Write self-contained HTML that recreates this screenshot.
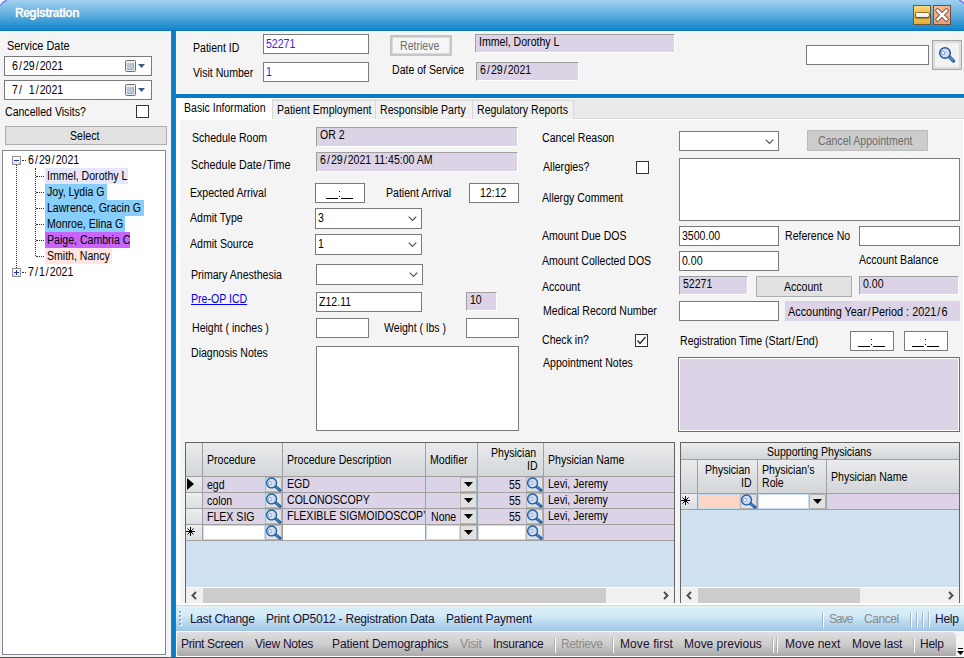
<!DOCTYPE html><html><head><meta charset="utf-8"><style>
*{margin:0;padding:0;box-sizing:content-box}
html,body{width:964px;height:658px;overflow:hidden;background:#f4f4f4;position:relative;font-family:'Liberation Sans',sans-serif;}
div{position:absolute}
.l{font-size:12px;line-height:14px;white-space:nowrap;color:#000;transform:scaleX(0.88);transform-origin:0 0}
.s{padding:0 1.2px}
.tb{background:#fff;border:1px solid #7a7a7a}
.lv{background:#dcd4e6;border-top:1px solid #a0a0a0;border-left:1px solid #a0a0a0;border-right:1px solid #fff;border-bottom:1px solid #fff}
.t{font-size:12px;line-height:14px;white-space:nowrap;color:#1a1030}
.hdr{background:linear-gradient(#e9ebed,#d3d6d9)}
.cell{background:#dcd4e6}
.gl{background:#a0a0a0}
</style></head><body>
<div style="left:0;top:0;width:964px;height:31px;background:linear-gradient(#a3d1ee,#62b0e0 45%,#1787cb 93%,#0878c2)"></div>
<div style="left:15px;top:6px;font-size:12px;line-height:15px;font-weight:bold;color:#fff;letter-spacing:-0.5px;-webkit-text-stroke:0.3px #fff;text-shadow:0 0 1px rgba(0,40,90,0.6)">Registration</div>
<svg style="position:absolute;left:0;top:0" width="9" height="9"><path d="M0 0 H7 Q2 1 0 6 Z" fill="#f2f2f2"/><path d="M7 0.5 Q2 1.5 0.5 6" fill="none" stroke="#7a7af8" stroke-width="1.3"/></svg>
<svg style="position:absolute;left:955px;top:0" width="9" height="9"><path d="M4 0 H9 V4 Q8 1 4 0 Z" fill="#f2f2f2"/><path d="M4 0.3 Q8 1 9 4" fill="none" stroke="#7a7af8" stroke-width="1.3"/></svg>
<div style="left:913px;top:5px;width:16px;height:18px;border:1px solid #6e5a3a;background:linear-gradient(#f9d98a,#f3c252 30%,#f0bc48 80%,#e4a838)"></div>
<div style="left:916px;top:13px;width:13px;height:4px;background:linear-gradient(#fff,#e8e8e8);border-radius:1px 2px 2px 1px;box-shadow:0 0 0 1px rgba(80,60,30,0.55),0 1px 1px 1px rgba(60,40,20,0.45)"></div>
<div style="left:933px;top:5px;width:16px;height:18px;border:1px solid #6e5040;background:linear-gradient(#f7b890,#ee9f72)"></div>
<svg style="position:absolute;left:933px;top:6px" width="18" height="18" viewBox="0 0 18 18"><path d="M4.5 4.5 L13.5 13.5 M13.5 4.5 L4.5 13.5" stroke="#503a30" stroke-width="4.2" stroke-linecap="round"/><path d="M4.5 4.5 L13.5 13.5 M13.5 4.5 L4.5 13.5" stroke="#fff" stroke-width="2.6" stroke-linecap="round"/></svg>
<div style="left:0;top:31px;width:964px;height:1px;background:#fcfcfc"></div>
<div class="l" style="left:7px;top:39px;transform:scaleX(0.91)">Service Date</div>
<div class="tb" style="left:4px;top:56px;width:146px;height:18px;border-color:#7a7a7a">
<div class="l" style="left:7px;top:2px;">6<span class="s">/</span>29<span class="s">/</span>2021</div>
<svg style="position:absolute;left:120px;top:3px" width="20" height="13" viewBox="0 0 20 13"><rect x="0.5" y="0.5" width="10" height="11" rx="1" fill="#e8eef8" stroke="#7a6a6a"/><rect x="2" y="3" width="7" height="7" fill="#aab2c2"/><g fill="#fff"><rect x="2.5" y="3.5" width="1" height="1"/><rect x="4.5" y="3.5" width="1" height="1"/><rect x="6.5" y="3.5" width="1" height="1"/><rect x="2.5" y="5.5" width="1" height="1"/><rect x="4.5" y="5.5" width="1" height="1"/><rect x="6.5" y="5.5" width="1" height="1"/><rect x="2.5" y="7.5" width="1" height="1"/><rect x="4.5" y="7.5" width="1" height="1"/><rect x="6.5" y="7.5" width="1" height="1"/></g><path d="M13 4 L20 4 L16.5 8 Z" fill="#3a5a8a"/></svg>
</div>
<div class="tb" style="left:4px;top:80px;width:146px;height:18px;border-color:#7a7a7a">
<div class="l" style="left:7px;top:2px;">7<span class="s">/</span>&nbsp; 1<span class="s">/</span>2021</div>
<svg style="position:absolute;left:120px;top:3px" width="20" height="13" viewBox="0 0 20 13"><rect x="0.5" y="0.5" width="10" height="11" rx="1" fill="#e8eef8" stroke="#7a6a6a"/><rect x="2" y="3" width="7" height="7" fill="#aab2c2"/><g fill="#fff"><rect x="2.5" y="3.5" width="1" height="1"/><rect x="4.5" y="3.5" width="1" height="1"/><rect x="6.5" y="3.5" width="1" height="1"/><rect x="2.5" y="5.5" width="1" height="1"/><rect x="4.5" y="5.5" width="1" height="1"/><rect x="6.5" y="5.5" width="1" height="1"/><rect x="2.5" y="7.5" width="1" height="1"/><rect x="4.5" y="7.5" width="1" height="1"/><rect x="6.5" y="7.5" width="1" height="1"/></g><path d="M13 4 L20 4 L16.5 8 Z" fill="#3a5a8a"/></svg>
</div>
<div class="l" style="left:5px;top:105px;">Cancelled Visits?</div>
<div style="left:136px;top:105px;width:11px;height:11px;border:1px solid #333;background:#fff"></div>
<div style="left:5px;top:126px;width:160px;height:17px;border:1px solid #adadad;background:#e1e1e1"></div>
<div class="l" style="left:70px;top:129px;">Select</div>
<div style="left:2px;top:150px;width:162px;height:503px;border:1px solid #828790;background:#fff"></div>
<div style="left:12px;top:156px;width:7px;height:7px;border:1px solid #919191;background:linear-gradient(#fff,#e0e0e0)"></div>
<div style="left:14px;top:160px;width:5px;height:1px;background:#1c3a8a"></div>
<div style="left:12px;top:268px;width:7px;height:7px;border:1px solid #919191;background:linear-gradient(#fff,#e0e0e0)"></div>
<div style="left:14px;top:272px;width:5px;height:1px;background:#1c3a8a"></div>
<div style="left:16px;top:270px;width:1px;height:5px;background:#1c3a8a"></div>
<div style="left:22px;top:160px;width:4px;border-top:1px dotted #303030"></div>
<div style="left:22px;top:272px;width:4px;border-top:1px dotted #303030"></div>
<div style="left:16px;top:165px;height:103px;border-left:1px dotted #303030"></div>
<div style="left:35px;top:168px;height:88px;border-left:1px dotted #303030"></div>
<div class="l" style="left:28px;top:153px;">6<span class="s">/</span>29<span class="s">/</span>2021</div>
<div style="left:36px;top:176px;width:8px;border-top:1px dotted #303030"></div>
<div style="left:45px;top:168px;width:83px;height:16px;background:#e6e6fa"></div>
<div class="l" style="left:47px;top:169px;">Immel, Dorothy L</div>
<div style="left:36px;top:192px;width:8px;border-top:1px dotted #303030"></div>
<div style="left:45px;top:184px;width:62px;height:16px;background:#87cefa"></div>
<div class="l" style="left:47px;top:185px;">Joy, Lydia G</div>
<div style="left:36px;top:208px;width:8px;border-top:1px dotted #303030"></div>
<div style="left:45px;top:200px;width:99px;height:16px;background:#87cefa"></div>
<div class="l" style="left:47px;top:201px;">Lawrence, Gracin G</div>
<div style="left:36px;top:224px;width:8px;border-top:1px dotted #303030"></div>
<div style="left:45px;top:216px;width:80px;height:16px;background:#87cefa"></div>
<div class="l" style="left:47px;top:217px;">Monroe, Elina G</div>
<div style="left:36px;top:240px;width:8px;border-top:1px dotted #303030"></div>
<div style="left:45px;top:232px;width:85px;height:16px;background:#c864f8"></div>
<div class="l" style="left:47px;top:233px;">Paige, Cambria C</div>
<div style="left:36px;top:256px;width:8px;border-top:1px dotted #303030"></div>
<div style="left:45px;top:248px;width:67px;height:16px;background:#ffe4e1"></div>
<div class="l" style="left:47px;top:249px;">Smith, Nancy</div>
<div class="l" style="left:28px;top:265px;">7<span class="s">/</span>1<span class="s">/</span>2021</div>
<div style="left:171px;top:31px;width:1px;height:627px;background:#6d6d6d"></div>
<div style="left:172px;top:31px;width:3px;height:627px;background:#0a7bc4"></div>
<div style="left:175px;top:31px;width:1px;height:627px;background:#6d6d6d"></div>
<div class="l" style="left:193px;top:41px;">Patient ID</div>
<div class="tb" style="left:263px;top:34px;width:104px;height:18px;">
<div class="l" style="left:2px;top:2px;color:#3a20e0;">52271</div>
</div>
<div class="l" style="left:193px;top:66px;">Visit Number</div>
<div class="tb" style="left:263px;top:62px;width:104px;height:18px;">
<div class="l" style="left:2px;top:2px;color:#3a20e0;">1</div>
</div>
<div style="left:390px;top:35px;width:58px;height:17px;border:2px solid #c6c6c6;background:#f6f6f6;box-shadow:inset 0 0 0 1px #dadada"></div>
<div class="l" style="left:400px;top:39px;color:#6d6d6d;">Retrieve</div>
<div class="lv" style="left:475px;top:34px;width:198px;height:17px;">
<div class="l" style="left:3px;top:0px;">Immel, Dorothy L</div>
</div>
<div class="l" style="left:392px;top:63px;">Date of Service</div>
<div class="lv" style="left:476px;top:62px;width:101px;height:17px;">
<div class="l" style="left:3px;top:0px;">6<span class="s">/</span>29<span class="s">/</span>2021</div>
</div>
<div class="tb" style="left:806px;top:45px;width:121px;height:18px;">
</div>
<div style="left:932px;top:40px;width:28px;height:28px;border:1px solid #a8a8a8;background:#f2f2f2;box-shadow:inset 0 0 0 2px #dcdcdc"></div>
<svg style="position:absolute;left:936px;top:44px" width="22" height="22" viewBox="0 0 22 22"><path d="M13 12.5 L17.5 17" stroke="#2a5ea8" stroke-width="3.4" stroke-linecap="round"/><path d="M13.5 13 L17 16.5" stroke="#6e94c8" stroke-width="1.2" stroke-linecap="round"/><circle cx="9" cy="9" r="5.3" fill="#d4dcf0" stroke="#1f5aa6" stroke-width="1.5"/><circle cx="7" cy="9" r="1.8" fill="#fff" stroke="#7d9bd0" stroke-width="1"/></svg>
<div style="left:176px;top:94px;width:788px;height:4px;background:#0a7bc4"></div>
<div style="left:176px;top:98px;width:788px;height:508px;background:#fff"></div>
<div style="left:176px;top:98px;width:788px;height:1px;background:#fbf7f6"></div>
<div style="left:272px;top:99px;width:692px;height:19px;background:#eaeaea"></div>
<div style="left:272px;top:118px;width:692px;height:1px;background:#d8d8d8"></div>
<div style="left:180px;top:120px;width:783px;height:485px;background:#f4f4f4"></div>
<div style="left:272px;top:100px;width:102px;height:18px;border:1px solid #d9d9d9;border-bottom:none;background:#f0f0f0"></div>
<div class="l" style="left:277px;top:103px;">Patient Employment</div>
<div style="left:375px;top:100px;width:96px;height:18px;border:1px solid #d9d9d9;border-bottom:none;background:#f0f0f0"></div>
<div class="l" style="left:380px;top:103px;">Responsible Party</div>
<div style="left:472px;top:100px;width:100px;height:18px;border:1px solid #d9d9d9;border-bottom:none;background:#f0f0f0"></div>
<div class="l" style="left:477px;top:103px;">Regulatory Reports</div>
<div class="l" style="left:184px;top:101px;">Basic Information</div>
<div class="l" style="left:192px;top:131px;">Schedule Room</div>
<div class="lv" style="left:316px;top:127px;width:200px;height:18px;">
<div class="l" style="left:3px;top:0px;">OR 2</div>
</div>
<div class="l" style="left:191px;top:158px;transform:scaleX(0.9)">Schedule Date<span class="s">/</span>Time</div>
<div class="lv" style="left:316px;top:152px;width:200px;height:18px;">
<div class="l" style="left:3px;top:0px;">6<span class="s">/</span>29<span class="s">/</span>2021 11:45:00 AM</div>
</div>
<div class="l" style="left:190px;top:186px;">Expected Arrival</div>
<div class="tb" style="left:315px;top:183px;width:48px;height:18px;">
<div style="left:10px;top:14px;width:12px;height:1px;background:#000"></div>
<div style="left:25px;top:14px;width:12px;height:1px;background:#000"></div>
<div style="left:23px;top:7px;width:1px;height:1px;background:#000"></div>
<div style="left:23px;top:12px;width:1px;height:1px;background:#000"></div>
</div>
<div class="l" style="left:386px;top:186px;">Patient Arrival</div>
<div class="tb" style="left:469px;top:183px;width:48px;height:18px;">
<div class="l" style="left:10px;top:2px;">12:12</div>
</div>
<div class="l" style="left:190px;top:211px;">Admit Type</div>
<div class="tb" style="left:315px;top:208px;width:105px;height:19px;">
<div class="l" style="left:2px;top:2px;">3</div>
<svg width="9" height="6" viewBox="0 0 9 6" style="position:absolute;right:4px;top:7px"><path d="M0.7 0.7 L4.5 4.5 L8.3 0.7" fill="none" stroke="#505050" stroke-width="1.15"/></svg>
</div>
<div class="l" style="left:190px;top:237px;">Admit Source</div>
<div class="tb" style="left:315px;top:234px;width:105px;height:19px;">
<div class="l" style="left:2px;top:2px;">1</div>
<svg width="9" height="6" viewBox="0 0 9 6" style="position:absolute;right:4px;top:7px"><path d="M0.7 0.7 L4.5 4.5 L8.3 0.7" fill="none" stroke="#505050" stroke-width="1.15"/></svg>
</div>
<div class="l" style="left:191px;top:268px;">Primary Anesthesia</div>
<div class="tb" style="left:316px;top:264px;width:105px;height:19px;">
<svg width="9" height="6" viewBox="0 0 9 6" style="position:absolute;right:4px;top:7px"><path d="M0.7 0.7 L4.5 4.5 L8.3 0.7" fill="none" stroke="#505050" stroke-width="1.15"/></svg>
</div>
<div class="l" style="left:191px;top:292px;color:#0000ee;text-decoration:underline;">Pre-OP ICD</div>
<div class="tb" style="left:316px;top:292px;width:104px;height:18px;">
<div class="l" style="left:2px;top:2px;">Z12.11</div>
</div>
<div class="lv" style="left:466px;top:292px;width:29px;height:17px;">
<div class="l" style="left:3px;top:0px;">10</div>
</div>
<div class="l" style="left:192px;top:321px;">Height ( inches )</div>
<div class="tb" style="left:316px;top:318px;width:51px;height:18px;">
</div>
<div class="l" style="left:384px;top:321px;">Weight ( lbs )</div>
<div class="tb" style="left:466px;top:318px;width:51px;height:18px;">
</div>
<div class="l" style="left:191px;top:346px;">Diagnosis Notes</div>
<div class="tb" style="left:316px;top:346px;width:201px;height:83px;">
</div>
<div class="l" style="left:542px;top:131px;">Cancel Reason</div>
<div class="tb" style="left:679px;top:131px;width:98px;height:18px;">
<svg width="9" height="6" viewBox="0 0 9 6" style="position:absolute;right:4px;top:7px"><path d="M0.7 0.7 L4.5 4.5 L8.3 0.7" fill="none" stroke="#505050" stroke-width="1.15"/></svg>
</div>
<div style="left:807px;top:130px;width:119px;height:19px;border:1px solid #bcbcbc;background:#cccccc"></div>
<div class="l" style="left:818px;top:134px;color:#6d6d6d;">Cancel Appointment</div>
<div class="l" style="left:543px;top:160px;">Allergies?</div>
<div style="left:636px;top:161px;width:11px;height:11px;border:1px solid #333;background:#fff"></div>
<div class="tb" style="left:679px;top:158px;width:279px;height:61px;">
</div>
<div class="l" style="left:542px;top:191px;">Allergy Comment</div>
<div class="l" style="left:542px;top:229px;">Amount Due DOS</div>
<div class="tb" style="left:679px;top:226px;width:98px;height:18px;">
<div class="l" style="left:2px;top:2px;">3500.00</div>
</div>
<div class="l" style="left:785px;top:229px;">Reference No</div>
<div class="tb" style="left:859px;top:226px;width:99px;height:18px;">
</div>
<div class="l" style="left:542px;top:254px;">Amount Collected DOS</div>
<div class="tb" style="left:679px;top:251px;width:98px;height:18px;">
<div class="l" style="left:2px;top:2px;">0.00</div>
</div>
<div class="l" style="left:859px;top:253px;">Account Balance</div>
<div class="l" style="left:542px;top:280px;">Account</div>
<div class="lv" style="left:679px;top:276px;width:67px;height:17px;">
<div class="l" style="left:3px;top:0px;">52271</div>
</div>
<div style="left:756px;top:276px;width:94px;height:19px;border:1px solid #adadad;background:#e1e1e1"></div>
<div class="l" style="left:784px;top:280px;">Account</div>
<div class="lv" style="left:859px;top:276px;width:98px;height:17px;">
<div class="l" style="left:3px;top:0px;">0.00</div>
</div>
<div class="l" style="left:543px;top:304px;">Medical Record Number</div>
<div class="tb" style="left:679px;top:301px;width:98px;height:18px;">
</div>
<div style="left:785px;top:301px;width:175px;height:20px;background:#dcd4e6"></div>
<div class="l" style="left:788px;top:305px;transform:scaleX(0.905)">Accounting Year<span class="s">/</span>Period : 2021<span class="s">/</span>6</div>
<div class="l" style="left:542px;top:333px;">Check in?</div>
<div style="left:635px;top:334px;width:11px;height:11px;border:1px solid #333;background:#fff"></div>
<svg style="position:absolute;left:635px;top:334px" width="13" height="13"><path d="M2.5 6.5 L5 9.5 L10.5 3" fill="none" stroke="#222" stroke-width="1.2"/></svg>
<div class="l" style="left:680px;top:334px;">Registration Time (Start<span class="s">/</span>End)</div>
<div class="tb" style="left:850px;top:331px;width:42px;height:18px;">
<div style="left:7px;top:14px;width:12px;height:1px;background:#000"></div>
<div style="left:22px;top:14px;width:12px;height:1px;background:#000"></div>
<div style="left:20px;top:7px;width:1px;height:1px;background:#000"></div>
<div style="left:20px;top:12px;width:1px;height:1px;background:#000"></div>
</div>
<div class="tb" style="left:904px;top:331px;width:42px;height:18px;">
<div style="left:7px;top:14px;width:12px;height:1px;background:#000"></div>
<div style="left:22px;top:14px;width:12px;height:1px;background:#000"></div>
<div style="left:20px;top:7px;width:1px;height:1px;background:#000"></div>
<div style="left:20px;top:12px;width:1px;height:1px;background:#000"></div>
</div>
<div class="l" style="left:543px;top:356px;">Appointment Notes</div>
<div style="left:678px;top:357px;width:280px;height:73px;border:1px solid #6d6d6d;background:#dcd4e6;box-shadow:inset 0 0 0 1px #fff"></div>
<div style="left:185px;top:442px;width:488px;height:160px;border:1px solid #646464;border-bottom:none;background:#cfe0f1"></div>
<div class="hdr" style="left:186px;top:443px;width:488px;height:33px"></div>
<div class="gl" style="left:186px;top:476px;width:488px;height:1px"></div>
<div class="gl" style="left:202px;top:443px;width:1px;height:97px"></div>
<div class="gl" style="left:282px;top:443px;width:1px;height:97px"></div>
<div class="gl" style="left:425px;top:443px;width:1px;height:97px"></div>
<div class="gl" style="left:477px;top:443px;width:1px;height:97px"></div>
<div class="gl" style="left:543px;top:443px;width:1px;height:97px"></div>
<div class="l" style="left:207px;top:453px;">Procedure</div>
<div class="l" style="left:287px;top:453px;">Procedure Description</div>
<div class="l" style="left:430px;top:453px;">Modifier</div>
<div class="l" style="left:491px;top:446px;">Physician</div>
<div class="l" style="left:527px;top:459px;">ID</div>
<div class="l" style="left:548px;top:453px;">Physician Name</div>
<div class="hdr" style="left:186px;top:477px;width:16px;height:15px;background:linear-gradient(#eceef0,#dcdfe2)"></div>
<div class="gl" style="left:186px;top:492px;width:488px;height:1px"></div>
<div style="left:203px;top:477px;width:60px;height:13px;border:1px solid #c8dcf0;background:#dcd4e6"></div>
<div style="left:265px;top:477px;width:15px;height:13px;border:1px solid #b4b4b4;background:#e2e2e2"></div>
<svg style="position:absolute;left:265px;top:477px" width="17" height="15" viewBox="0 0 17 15"><path d="M10.2 9.4 L15 13.2" stroke="#2360aa" stroke-width="3" stroke-linecap="round"/><path d="M11 10 L14.4 12.7" stroke="#7096c8" stroke-width="0.9"/><circle cx="6.55" cy="5.9" r="4.95" fill="#d2daee" stroke="#1d5fa8" stroke-width="1.4"/><circle cx="4.7" cy="6.1" r="1.7" fill="#fff" stroke="#8da4d6" stroke-width="1"/></svg>
<div style="left:283px;top:477px;width:142px;height:15px;background:#dcd4e6"></div>
<div style="left:426px;top:477px;width:32px;height:13px;border:1px solid #c8dcf0;background:#dcd4e6"></div>
<div style="left:460px;top:477px;width:15px;height:13px;border:1px solid #b4b4b4;background:#e2e2e2"></div>
<svg style="position:absolute;left:464px;top:482px" width="9" height="5"><path d="M0 0 L9 0 L4.5 5 Z" fill="#000"/></svg>
<div style="left:478px;top:477px;width:46px;height:13px;border:1px solid #c8dcf0;background:#dcd4e6"></div>
<div style="left:526px;top:477px;width:15px;height:13px;border:1px solid #b4b4b4;background:#e2e2e2"></div>
<svg style="position:absolute;left:526px;top:477px" width="17" height="15" viewBox="0 0 17 15"><path d="M10.2 9.4 L15 13.2" stroke="#2360aa" stroke-width="3" stroke-linecap="round"/><path d="M11 10 L14.4 12.7" stroke="#7096c8" stroke-width="0.9"/><circle cx="6.55" cy="5.9" r="4.95" fill="#d2daee" stroke="#1d5fa8" stroke-width="1.4"/><circle cx="4.7" cy="6.1" r="1.7" fill="#fff" stroke="#8da4d6" stroke-width="1"/></svg>
<div style="left:544px;top:477px;width:130px;height:15px;background:#dcd4e6"></div>
<div class="l" style="left:207px;top:478px;">egd</div>
<div style="left:283px;top:477px;width:142px;height:15px;overflow:hidden"><div class="l" style="left:4px;top:0px">EGD</div></div>
<div class="l" style="left:509px;top:478px;">55</div>
<div class="l" style="left:548px;top:477px;">Levi, Jeremy</div>
<svg style="position:absolute;left:187px;top:478px" width="7" height="12"><path d="M0 0 L7 6 L0 12 Z" fill="#000"/></svg>
<div class="hdr" style="left:186px;top:493px;width:16px;height:15px;background:linear-gradient(#eceef0,#dcdfe2)"></div>
<div class="gl" style="left:186px;top:508px;width:488px;height:1px"></div>
<div style="left:203px;top:493px;width:60px;height:13px;border:1px solid #c8dcf0;background:#dcd4e6"></div>
<div style="left:265px;top:493px;width:15px;height:13px;border:1px solid #b4b4b4;background:#e2e2e2"></div>
<svg style="position:absolute;left:265px;top:493px" width="17" height="15" viewBox="0 0 17 15"><path d="M10.2 9.4 L15 13.2" stroke="#2360aa" stroke-width="3" stroke-linecap="round"/><path d="M11 10 L14.4 12.7" stroke="#7096c8" stroke-width="0.9"/><circle cx="6.55" cy="5.9" r="4.95" fill="#d2daee" stroke="#1d5fa8" stroke-width="1.4"/><circle cx="4.7" cy="6.1" r="1.7" fill="#fff" stroke="#8da4d6" stroke-width="1"/></svg>
<div style="left:283px;top:493px;width:142px;height:15px;background:#dcd4e6"></div>
<div style="left:426px;top:493px;width:32px;height:13px;border:1px solid #c8dcf0;background:#dcd4e6"></div>
<div style="left:460px;top:493px;width:15px;height:13px;border:1px solid #b4b4b4;background:#e2e2e2"></div>
<svg style="position:absolute;left:464px;top:498px" width="9" height="5"><path d="M0 0 L9 0 L4.5 5 Z" fill="#000"/></svg>
<div style="left:478px;top:493px;width:46px;height:13px;border:1px solid #c8dcf0;background:#dcd4e6"></div>
<div style="left:526px;top:493px;width:15px;height:13px;border:1px solid #b4b4b4;background:#e2e2e2"></div>
<svg style="position:absolute;left:526px;top:493px" width="17" height="15" viewBox="0 0 17 15"><path d="M10.2 9.4 L15 13.2" stroke="#2360aa" stroke-width="3" stroke-linecap="round"/><path d="M11 10 L14.4 12.7" stroke="#7096c8" stroke-width="0.9"/><circle cx="6.55" cy="5.9" r="4.95" fill="#d2daee" stroke="#1d5fa8" stroke-width="1.4"/><circle cx="4.7" cy="6.1" r="1.7" fill="#fff" stroke="#8da4d6" stroke-width="1"/></svg>
<div style="left:544px;top:493px;width:130px;height:15px;background:#dcd4e6"></div>
<div class="l" style="left:207px;top:494px;">colon</div>
<div style="left:283px;top:493px;width:142px;height:15px;overflow:hidden"><div class="l" style="left:4px;top:0px">COLONOSCOPY</div></div>
<div class="l" style="left:509px;top:494px;">55</div>
<div class="l" style="left:548px;top:493px;">Levi, Jeremy</div>
<div class="hdr" style="left:186px;top:509px;width:16px;height:15px;background:linear-gradient(#eceef0,#dcdfe2)"></div>
<div class="gl" style="left:186px;top:524px;width:488px;height:1px"></div>
<div style="left:203px;top:509px;width:60px;height:13px;border:1px solid #c8dcf0;background:#dcd4e6"></div>
<div style="left:265px;top:509px;width:15px;height:13px;border:1px solid #b4b4b4;background:#e2e2e2"></div>
<svg style="position:absolute;left:265px;top:509px" width="17" height="15" viewBox="0 0 17 15"><path d="M10.2 9.4 L15 13.2" stroke="#2360aa" stroke-width="3" stroke-linecap="round"/><path d="M11 10 L14.4 12.7" stroke="#7096c8" stroke-width="0.9"/><circle cx="6.55" cy="5.9" r="4.95" fill="#d2daee" stroke="#1d5fa8" stroke-width="1.4"/><circle cx="4.7" cy="6.1" r="1.7" fill="#fff" stroke="#8da4d6" stroke-width="1"/></svg>
<div style="left:283px;top:509px;width:142px;height:15px;background:#dcd4e6"></div>
<div style="left:426px;top:509px;width:32px;height:13px;border:1px solid #c8dcf0;background:#dcd4e6"></div>
<div style="left:460px;top:509px;width:15px;height:13px;border:1px solid #b4b4b4;background:#e2e2e2"></div>
<svg style="position:absolute;left:464px;top:514px" width="9" height="5"><path d="M0 0 L9 0 L4.5 5 Z" fill="#000"/></svg>
<div style="left:478px;top:509px;width:46px;height:13px;border:1px solid #c8dcf0;background:#dcd4e6"></div>
<div style="left:526px;top:509px;width:15px;height:13px;border:1px solid #b4b4b4;background:#e2e2e2"></div>
<svg style="position:absolute;left:526px;top:509px" width="17" height="15" viewBox="0 0 17 15"><path d="M10.2 9.4 L15 13.2" stroke="#2360aa" stroke-width="3" stroke-linecap="round"/><path d="M11 10 L14.4 12.7" stroke="#7096c8" stroke-width="0.9"/><circle cx="6.55" cy="5.9" r="4.95" fill="#d2daee" stroke="#1d5fa8" stroke-width="1.4"/><circle cx="4.7" cy="6.1" r="1.7" fill="#fff" stroke="#8da4d6" stroke-width="1"/></svg>
<div style="left:544px;top:509px;width:130px;height:15px;background:#dcd4e6"></div>
<div class="l" style="left:207px;top:510px;">FLEX SIG</div>
<div style="left:283px;top:509px;width:142px;height:15px;overflow:hidden"><div class="l" style="left:4px;top:0px">FLEXIBLE SIGMOIDOSCOPY</div></div>
<div class="l" style="left:431px;top:510px;">None</div>
<div class="l" style="left:509px;top:510px;">55</div>
<div class="l" style="left:548px;top:509px;">Levi, Jeremy</div>
<div class="hdr" style="left:186px;top:525px;width:16px;height:15px;background:linear-gradient(#eceef0,#dcdfe2)"></div>
<div class="gl" style="left:186px;top:540px;width:488px;height:1px"></div>
<div style="left:203px;top:525px;width:60px;height:13px;border:1px solid #c8dcf0;background:#fff"></div>
<div style="left:265px;top:525px;width:15px;height:13px;border:1px solid #b4b4b4;background:#e2e2e2"></div>
<svg style="position:absolute;left:265px;top:525px" width="17" height="15" viewBox="0 0 17 15"><path d="M10.2 9.4 L15 13.2" stroke="#2360aa" stroke-width="3" stroke-linecap="round"/><path d="M11 10 L14.4 12.7" stroke="#7096c8" stroke-width="0.9"/><circle cx="6.55" cy="5.9" r="4.95" fill="#d2daee" stroke="#1d5fa8" stroke-width="1.4"/><circle cx="4.7" cy="6.1" r="1.7" fill="#fff" stroke="#8da4d6" stroke-width="1"/></svg>
<div style="left:283px;top:525px;width:142px;height:15px;background:#fff"></div>
<div style="left:426px;top:525px;width:32px;height:13px;border:1px solid #c8dcf0;background:#fff"></div>
<div style="left:460px;top:525px;width:15px;height:13px;border:1px solid #b4b4b4;background:#e2e2e2"></div>
<svg style="position:absolute;left:464px;top:530px" width="9" height="5"><path d="M0 0 L9 0 L4.5 5 Z" fill="#000"/></svg>
<div style="left:478px;top:525px;width:46px;height:13px;border:1px solid #c8dcf0;background:#fff"></div>
<div style="left:526px;top:525px;width:15px;height:13px;border:1px solid #b4b4b4;background:#e2e2e2"></div>
<svg style="position:absolute;left:526px;top:525px" width="17" height="15" viewBox="0 0 17 15"><path d="M10.2 9.4 L15 13.2" stroke="#2360aa" stroke-width="3" stroke-linecap="round"/><path d="M11 10 L14.4 12.7" stroke="#7096c8" stroke-width="0.9"/><circle cx="6.55" cy="5.9" r="4.95" fill="#d2daee" stroke="#1d5fa8" stroke-width="1.4"/><circle cx="4.7" cy="6.1" r="1.7" fill="#fff" stroke="#8da4d6" stroke-width="1"/></svg>
<div style="left:544px;top:525px;width:130px;height:15px;background:#dcd4e6"></div>
<svg style="position:absolute;left:185px;top:526px" width="11" height="11" viewBox="0 0 11 11"><path d="M1 5.5 H10 M5.5 1 V10 M2.5 2.5 L8.5 8.5 M8.5 2.5 L2.5 8.5" stroke="#000" stroke-width="1"/><circle cx="5.5" cy="5.5" r="1.3" fill="#000"/></svg>
<div style="left:186px;top:587px;width:488px;height:1px;background:#fff"></div>
<div style="left:186px;top:588px;width:488px;height:15px;background:#f0f0f0"></div>
<div style="left:203px;top:588px;width:403px;height:15px;background:#cdcdcd"></div>
<svg style="position:absolute;left:190px;top:591px" width="8" height="9"><path d="M6 1 L2.5 4.5 L6 8" fill="none" stroke="#505050" stroke-width="2"/></svg>
<svg style="position:absolute;left:662px;top:591px" width="8" height="9"><path d="M2 1 L5.5 4.5 L2 8" fill="none" stroke="#505050" stroke-width="2"/></svg>
<div style="left:680px;top:442px;width:278px;height:160px;border:1px solid #646464;border-bottom:none;background:#cfe0f1"></div>
<div class="hdr" style="left:681px;top:443px;width:278px;height:16px"></div>
<div class="gl" style="left:681px;top:459px;width:278px;height:1px"></div>
<div class="hdr" style="left:681px;top:460px;width:278px;height:33px"></div>
<div class="gl" style="left:681px;top:493px;width:278px;height:1px"></div>
<div class="l" style="left:767px;top:445px;">Supporting Physicians</div>
<div class="gl" style="left:697px;top:460px;width:1px;height:50px"></div>
<div class="gl" style="left:757px;top:460px;width:1px;height:50px"></div>
<div class="gl" style="left:826px;top:460px;width:1px;height:50px"></div>
<div class="l" style="left:705px;top:463px;">Physician</div>
<div class="l" style="left:741px;top:476px;">ID</div>
<div class="l" style="left:762px;top:463px;">Physician's</div>
<div class="l" style="left:762px;top:476px;">Role</div>
<div class="l" style="left:831px;top:470px;">Physician Name</div>
<div style="left:681px;top:494px;width:16px;height:15px;background:linear-gradient(#eceef0,#dcdfe2)"></div>
<svg style="position:absolute;left:680px;top:495px" width="11" height="11" viewBox="0 0 11 11"><path d="M1 5.5 H10 M5.5 1 V10 M2.5 2.5 L8.5 8.5 M8.5 2.5 L2.5 8.5" stroke="#000" stroke-width="1"/><circle cx="5.5" cy="5.5" r="1.3" fill="#000"/></svg>
<div class="gl" style="left:681px;top:509px;width:278px;height:1px"></div>
<div style="left:698px;top:494px;width:40px;height:13px;border:1px solid #c8dcf0;background:#fdd5c4"></div>
<div style="left:740px;top:494px;width:15px;height:13px;border:1px solid #b4b4b4;background:#e2e2e2"></div>
<svg style="position:absolute;left:740px;top:494px" width="17" height="15" viewBox="0 0 17 15"><path d="M10.2 9.4 L15 13.2" stroke="#2360aa" stroke-width="3" stroke-linecap="round"/><path d="M11 10 L14.4 12.7" stroke="#7096c8" stroke-width="0.9"/><circle cx="6.55" cy="5.9" r="4.95" fill="#d2daee" stroke="#1d5fa8" stroke-width="1.4"/><circle cx="4.7" cy="6.1" r="1.7" fill="#fff" stroke="#8da4d6" stroke-width="1"/></svg>
<div style="left:758px;top:494px;width:49px;height:13px;border:1px solid #c8dcf0;background:#fff"></div>
<div style="left:809px;top:494px;width:15px;height:13px;border:1px solid #b4b4b4;background:#e2e2e2"></div>
<svg style="position:absolute;left:813px;top:499px" width="9" height="5"><path d="M0 0 L9 0 L4.5 5 Z" fill="#000"/></svg>
<div style="left:827px;top:494px;width:132px;height:15px;background:#dcd4e6"></div>
<div style="left:681px;top:587px;width:278px;height:1px;background:#fff"></div>
<div style="left:681px;top:588px;width:278px;height:15px;background:#f0f0f0"></div>
<div style="left:698px;top:588px;width:162px;height:15px;background:#cdcdcd"></div>
<svg style="position:absolute;left:685px;top:591px" width="8" height="9"><path d="M6 1 L2.5 4.5 L6 8" fill="none" stroke="#505050" stroke-width="2"/></svg>
<svg style="position:absolute;left:947px;top:591px" width="8" height="9"><path d="M2 1 L5.5 4.5 L2 8" fill="none" stroke="#505050" stroke-width="2"/></svg>
<div style="left:176px;top:603px;width:788px;height:2px;background:#fff"></div>
<div style="left:176px;top:605px;width:788px;height:1px;background:#d6d6d6"></div>
<div style="left:176px;top:606px;width:788px;height:2px;background:#eaeef0"></div>
<div style="left:176px;top:608px;width:788px;height:23px;background:linear-gradient(#d5eef8,#d3ecf8 30%,#b8d8ef 65%,#a3c8e8 96%,#92bde6)"></div>
<div style="left:179px;top:611px;width:2px;height:2px;background:#a4a4a4;box-shadow:1px 1px 0 #fff"></div>
<div style="left:179px;top:615px;width:2px;height:2px;background:#a4a4a4;box-shadow:1px 1px 0 #fff"></div>
<div style="left:179px;top:619px;width:2px;height:2px;background:#a4a4a4;box-shadow:1px 1px 0 #fff"></div>
<div style="left:179px;top:623px;width:2px;height:2px;background:#a4a4a4;box-shadow:1px 1px 0 #fff"></div>
<div class="t" style="left:190px;top:612px;letter-spacing:-0.321px;">Last Change</div>
<div class="t" style="left:266px;top:612px;letter-spacing:-0.218px;">Print OP5012 - Registration Data</div>
<div class="t" style="left:446px;top:612px;letter-spacing:-0.141px;">Patient Payment</div>
<div style="left:822px;top:612px;width:1px;height:16px;background:#a4b8cc;box-shadow:1px 0 0 #fff"></div>
<div class="t" style="left:829px;top:612px;letter-spacing:-0.936px;color:#8a8a8a">Save</div>
<div class="t" style="left:864px;top:612px;letter-spacing:-0.427px;color:#8a8a8a">Cancel</div>
<div style="left:910px;top:612px;width:1px;height:16px;background:#a4b8cc;box-shadow:1px 0 0 #fff"></div>
<div style="left:916px;top:612px;width:1px;height:16px;background:#a4b8cc;box-shadow:1px 0 0 #fff"></div>
<div style="left:922px;top:612px;width:1px;height:16px;background:#a4b8cc;box-shadow:1px 0 0 #fff"></div>
<div style="left:928px;top:612px;width:1px;height:16px;background:#a4b8cc;box-shadow:1px 0 0 #fff"></div>
<div class="t" style="left:935px;top:612px;letter-spacing:-0.272px;">Help</div>
<div style="left:176px;top:631px;width:780px;height:26px;background:#fff;border-radius:2px 4px 0 2px"></div>
<div style="left:177px;top:632px;width:779px;height:24px;border-radius:2px 4px 0 2px;background:linear-gradient(#dedede,#cdcdcd 50%,#a9a9a9)"></div>
<div style="left:0;top:657px;width:964px;height:1px;background:#5a5a5a"></div>
<div class="t" style="left:181px;top:637px;letter-spacing:-0.318px;">Print Screen</div>
<div class="t" style="left:255px;top:637px;letter-spacing:-0.237px;">View Notes</div>
<div class="t" style="left:332px;top:637px;letter-spacing:-0.082px;">Patient Demographics</div>
<div class="t" style="left:460px;top:637px;letter-spacing:-0.131px;color:#8a8a8a">Visit</div>
<div class="t" style="left:493px;top:637px;letter-spacing:-0.254px;">Insurance</div>
<div style="left:554px;top:638px;width:1px;height:15px;background:#b0b0b0;box-shadow:1px 0 0 #fff"></div>
<div class="t" style="left:561px;top:637px;letter-spacing:-0.398px;color:#8a8a8a">Retrieve</div>
<div style="left:612px;top:638px;width:1px;height:15px;background:#b0b0b0;box-shadow:1px 0 0 #fff"></div>
<div class="t" style="left:620px;top:637px;letter-spacing:0.090px;">Move first</div>
<div class="t" style="left:684px;top:637px;letter-spacing:-0.018px;">Move previous</div>
<div style="left:772px;top:638px;width:1px;height:15px;background:#b0b0b0;box-shadow:1px 0 0 #fff"></div>
<div style="left:776px;top:638px;width:1px;height:15px;background:#b0b0b0;box-shadow:1px 0 0 #fff"></div>
<div class="t" style="left:785px;top:637px;letter-spacing:-0.005px;">Move next</div>
<div class="t" style="left:852px;top:637px;letter-spacing:-0.116px;">Move last</div>
<div style="left:913px;top:638px;width:1px;height:15px;background:#b0b0b0;box-shadow:1px 0 0 #fff"></div>
<div class="t" style="left:920px;top:637px;letter-spacing:-0.272px;">Help</div>
<div style="left:958px;top:648px;width:5px;height:1px;background:#000"></div>
<svg style="position:absolute;left:957px;top:651px" width="7" height="4"><path d="M0 0 L7 0 L3.5 4 Z" fill="#000"/></svg>
</body></html>
